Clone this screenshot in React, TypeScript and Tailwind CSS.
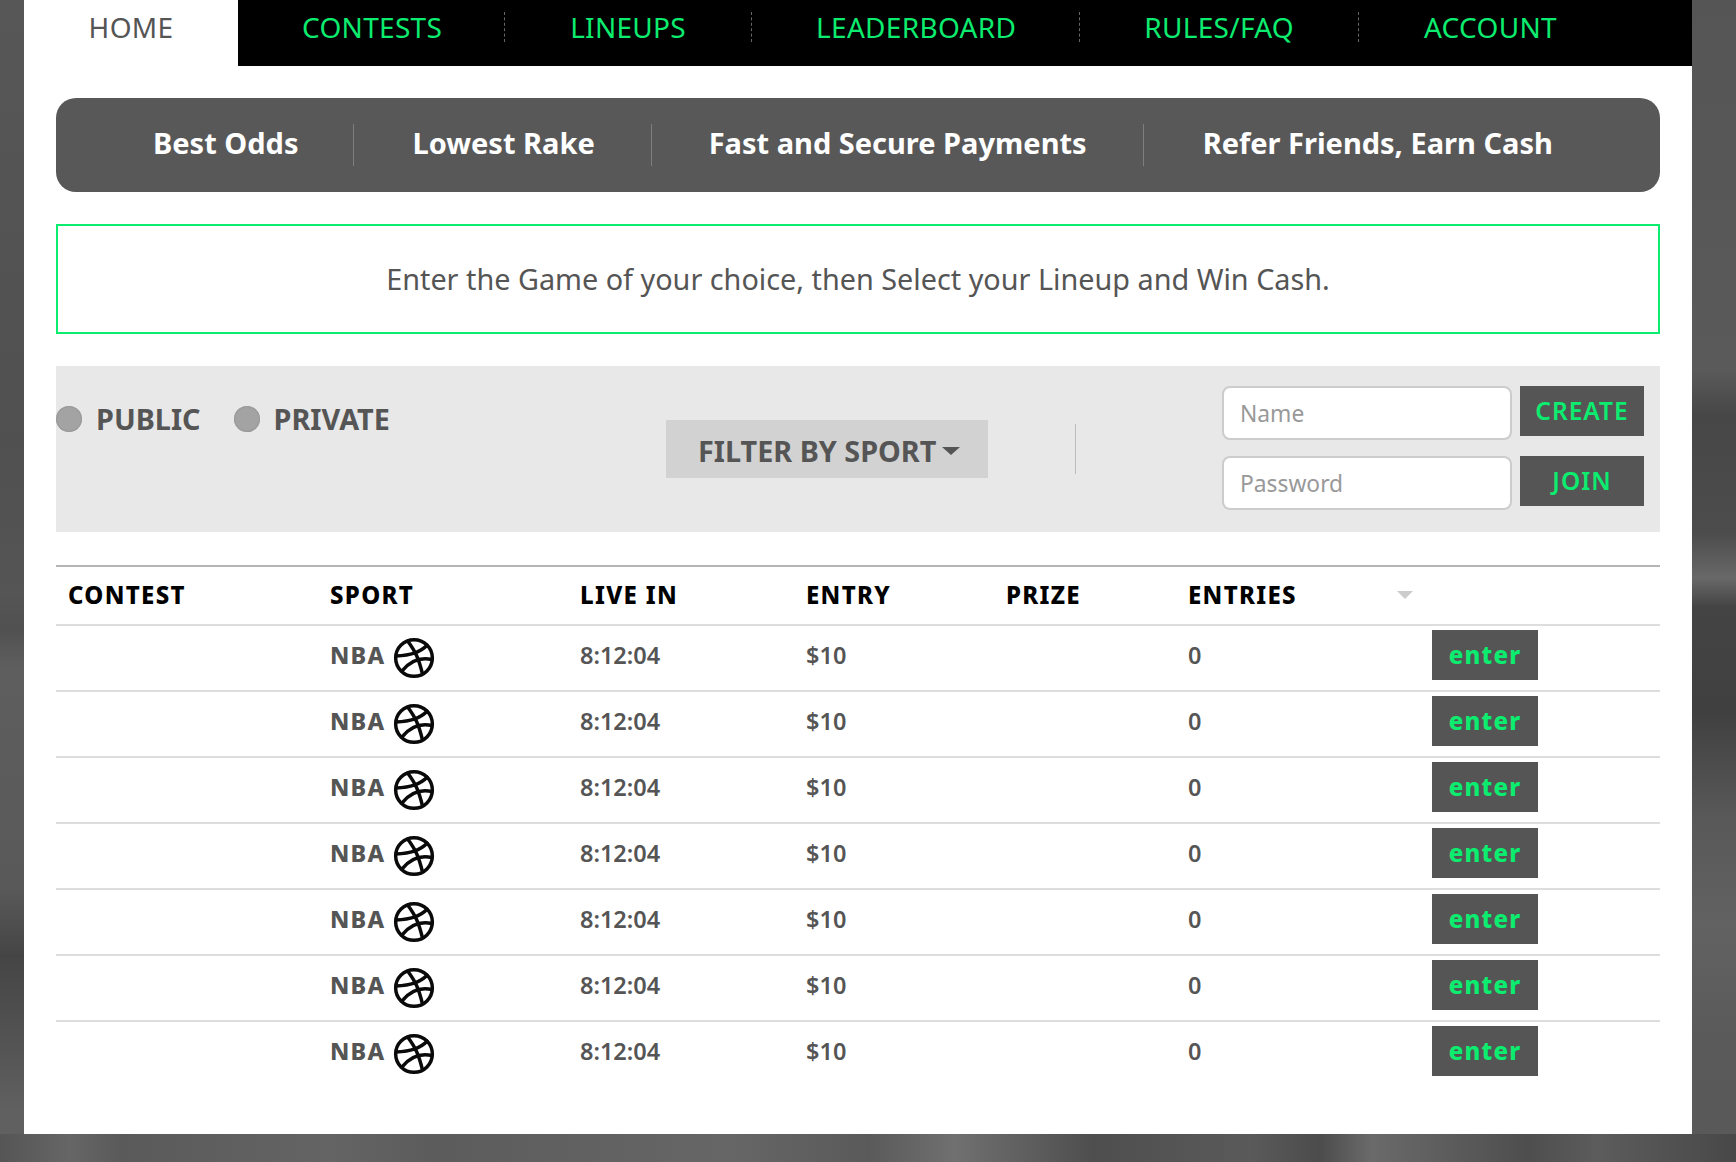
const font = "font-['Noto_Sans','Open_Sans',sans-serif]";

function Ball() {
  return (
    <svg width="44" height="44" viewBox="0 0 24 24" fill="none" stroke="#0a0a0a" strokeWidth="1.9" strokeLinecap="round" className="mt-[4px] shrink-0">
      <circle cx="12" cy="12" r="10" />
      <path d="M19.13 5.09C15.22 9.14 10 10.44 2.25 10.94" />
      <path d="M21.75 12.84c-6.62-1.41-12.14 1-16.38 6.32" />
      <path d="M8.56 2.75c4.37 6 6 9.42 8 17.72" />
    </svg>
  );
}

const navItems = [
  { label: "CONTESTS", cls: "pl-[64px] pr-[62px]" },
  { label: "LINEUPS", cls: "pl-[65px] pr-[65px]" },
  { label: "LEADERBOARD", cls: "pl-[64px] pr-[63px]" },
  { label: "RULES/FAQ", cls: "pl-[64px] pr-[64px]" },
  { label: "ACCOUNT", cls: "pl-[65px]" },
];

function Nav() {
  return (
    <div className="flex h-[66px] bg-black text-[28px] leading-[54px] tracking-[0.3px]">
      <div className="flex w-[214px] justify-center bg-white text-[#555555]">HOME</div>
      <div className="flex flex-1">
        {navItems.map((n, i) => (
          <div key={n.label} className="flex items-start">
            <span className={`${n.cls} text-[#0cec6f]`}>{n.label}</span>
            {i < navItems.length - 1 && (
              <span className="mt-[12px] h-[30px] border-l border-dashed border-[#666666]" />
            )}
          </div>
        ))}
      </div>
    </div>
  );
}

const perks = [
  { label: "Best Odds", cls: "pl-[97px] pr-[55px]" },
  { label: "Lowest Rake", cls: "pl-[58px] pr-[56px]" },
  { label: "Fast and Secure Payments", cls: "pl-[57px] pr-[56px]" },
  { label: "Refer Friends, Earn Cash", cls: "pl-[59px]" },
];

function Perks() {
  return (
    <div className="flex h-[94px] items-center rounded-[20px] bg-[#585858] text-[29px] font-bold text-white">
      {perks.map((p, i) => (
        <div key={p.label} className="flex items-center">
          <span className={`${p.cls} pb-[4px]`}>{p.label}</span>
          {i < perks.length - 1 && <span className="h-[42px] w-[1px] bg-[#7e7e7e]" />}
        </div>
      ))}
    </div>
  );
}

function Radio({ label, cls }: { label: string; cls: string }) {
  return (
    <div className={`flex items-center gap-[14px] ${cls}`}>
      <span className="h-[26px] w-[26px] rounded-full bg-[#a3a3a3] shadow-[inset_0_0_2px_#808080]" />
      <span className="text-[28.8px] font-bold leading-[26px] text-[#555555]">{label}</span>
    </div>
  );
}

function Field({ ph, btn }: { ph: string; btn: string }) {
  return (
    <div className="flex items-start gap-[8px]">
      <input
        placeholder={ph}
        className="h-[54px] w-[290px] rounded-[8px] border-2 border-[#cccccc] bg-white px-[16px] text-[22.8px] text-[#555555] placeholder:text-[#999999]"
      />
      <button className="h-[50px] w-[124px] bg-[#555555] pt-[1px] text-[24.5px] font-semibold tracking-[1px] text-[#0cec6f]">{btn}</button>
    </div>
  );
}

function Filters() {
  return (
    <div className="flex h-[166px] bg-[#e8e8e8]">
      <div className="flex h-[42px] w-[610px] pt-[53px]">
        <Radio label="PUBLIC" cls="mr-[33px]" />
        <Radio label="PRIVATE" cls="" />
      </div>
      <div className="mt-[54px] flex h-[58px] w-[322px] items-center bg-[#d2d2d2] pl-[32px] pt-[4px] text-[28.8px] font-bold text-[#555555]">
        <span>FILTER BY SPORT</span>
        <span className="ml-[6px] h-0 w-0 border-x-[9px] border-t-[8px] border-x-transparent border-t-[#555555]" />
      </div>
      <div className="ml-[87px] mt-[58px] h-[50px] w-[1px] bg-[#bdbdbd]" />
      <div className="ml-[146px] mt-[20px] flex flex-col gap-[16px]">
        <Field ph="Name" btn="CREATE" />
        <Field ph="Password" btn="JOIN" />
      </div>
    </div>
  );
}

const grid = "grid grid-cols-[262px_250px_226px_200px_182px_244px_1fr]";

function Table() {
  return (
    <div className="mt-[33px] border-t-2 border-[#b5b5b5]">
      <div className={`${grid} h-[59px] items-center border-b-2 border-[#dddddd] pb-[1px] text-[24px] font-extrabold tracking-[1.3px] text-black`}>
        <span className="pl-[12px]">CONTEST</span>
        <span className="pl-[12px]">SPORT</span>
        <span className="pl-[12px]">LIVE IN</span>
        <span className="pl-[12px]">ENTRY</span>
        <span className="pl-[12px]">PRIZE</span>
        <span className="flex items-center pl-[12px]">
          ENTRIES
          <span className="ml-[100px] h-0 w-0 border-x-[8px] border-t-[8px] border-x-transparent border-t-[#cccccc]" />
        </span>
        <span />
      </div>
      {[0, 1, 2, 3, 4, 5, 6].map((i) => (
        <div key={i} className={`${grid} h-[66px] items-center border-b-2 pb-[5px] text-[23.5px] font-semibold text-[#555555] ${i < 6 ? "border-[#dddddd]" : "border-transparent"}`}>
          <span />
          <span className="flex items-center gap-[7px] pl-[12px]">
            <span className="font-extrabold tracking-[1.2px]">NBA</span>
            <Ball />
          </span>
          <span className="pl-[12px]">8:12:04</span>
          <span className="pl-[12px]">$10</span>
          <span />
          <span className="pl-[12px]">0</span>
          <span className="pl-[12px] pb-[1px]">
            <button className="flex h-[50px] w-[106px] items-center justify-center bg-[#555555] text-[24px] font-extrabold tracking-[1.2px] text-[#0cec6f]">enter</button>
          </span>
        </div>
      ))}
    </div>
  );
}

export default function App() {
  return (
    <div className={`${font} flex h-[1162px] w-[1736px] flex-col overflow-hidden`}>
      <div className="flex h-[1134px]">
        <div className="w-[24px] bg-[linear-gradient(to_bottom,#575757_0px,#505050_445px,#555555_593px,#515151_630px,#5e5e5e_667px,#595959_889px,#454545_956px,#555555_1052px,#606060_1111px)]" />
        <div className="w-[1668px] bg-white">
          <Nav />
          <div className="px-[32px] pt-[32px]">
            <Perks />
            <div className="mt-[32px] flex h-[110px] items-center justify-center border-2 border-[#0cec6f] text-[28.8px] text-[#555555]">
              Enter the Game of your choice, then Select your Lineup and Win Cash.
            </div>
            <div className="mt-[32px]">
              <Filters />
            </div>
            <Table />
          </div>
        </div>
        <div className="w-[44px] bg-[linear-gradient(to_bottom,#555555_0px,#5a5a5a_370px,#474747_415px,#4c4c4c_533px,#686868_578px,#444444_607px,#404040_711px,#585858_815px,#626262_926px,#5a5a5a_1037px,#595959_1134px)]" />
      </div>
      <div className="h-[28px] bg-[linear-gradient(to_right,#555555_0%,#666666_4%,#5a5a5a_7%,#646464_19%,#5c5c5c_25%,#666666_42%,#5a5a5a_50%,#707070_55%,#4e4e4e_63%,#5a5a5a_72%,#4c4c4c_76%,#6a6a6a_79%,#4e4e4e_88%,#5c5c5c_92%,#484848_100%)]" />
    </div>
  );
}
